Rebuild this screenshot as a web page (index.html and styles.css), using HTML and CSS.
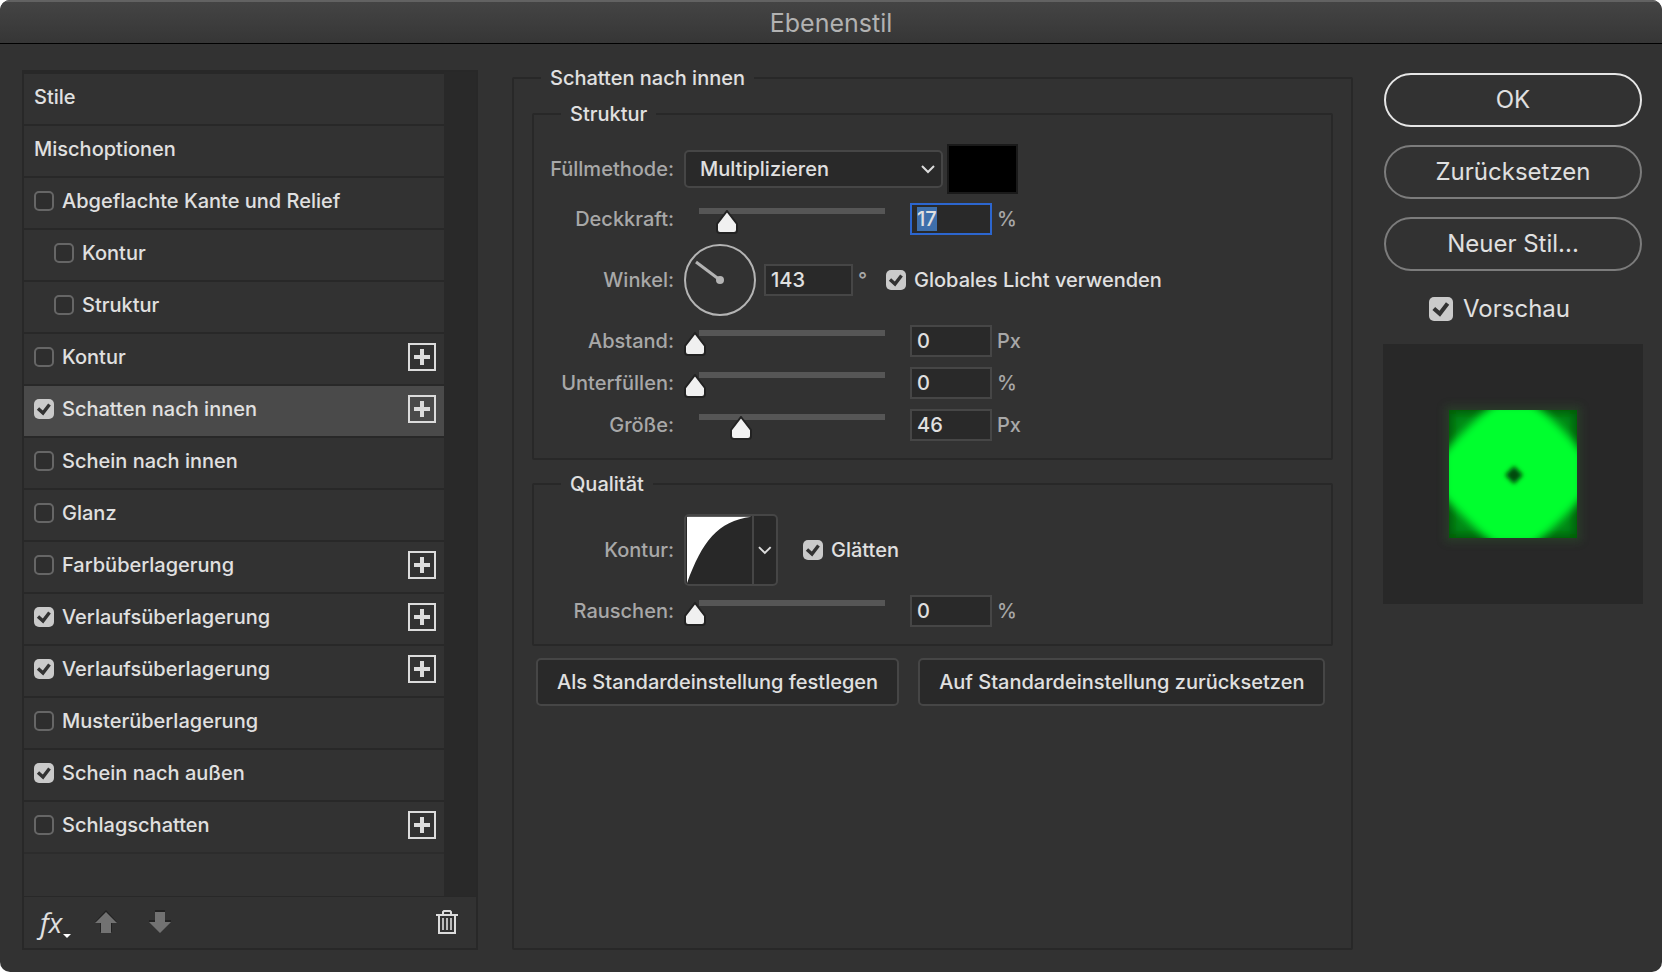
FILE: index.html
```
<!DOCTYPE html>
<html lang="de">
<head>
    <meta charset="UTF-8">
    <meta name="viewport" content="width=device-width, initial-scale=1.0">
    <title>Ebenenstil</title>
    <link rel="stylesheet" href="styles.css">
</head>
<body>
    <div class="dialog">
        <header class="titlebar">
            <h1>Ebenenstil</h1>
        </header>

        <main class="content">
            <aside class="sidebar">
                <div class="effects">
                    <ul class="effect-list">
                        <li class="effect">Stile</li>
                        <li class="effect">Mischoptionen</li>
                        <li class="effect"><label><input type="checkbox"> Abgeflachte Kante und Relief</label></li>
                        <li class="effect sub"><label><input type="checkbox"> Kontur</label></li>
                        <li class="effect sub"><label><input type="checkbox"> Struktur</label></li>
                        <li class="effect"><label><input type="checkbox"> Kontur</label><button class="add" aria-label="Kontur hinzufügen"></button></li>
                        <li class="effect active"><label><input type="checkbox" checked> Schatten nach innen</label><button class="add" aria-label="Schatten nach innen hinzufügen"></button></li>
                        <li class="effect"><label><input type="checkbox"> Schein nach innen</label></li>
                        <li class="effect"><label><input type="checkbox"> Glanz</label></li>
                        <li class="effect"><label><input type="checkbox"> Farbüberlagerung</label><button class="add" aria-label="Farbüberlagerung hinzufügen"></button></li>
                        <li class="effect"><label><input type="checkbox" checked> Verlaufsüberlagerung</label><button class="add" aria-label="Verlaufsüberlagerung hinzufügen"></button></li>
                        <li class="effect"><label><input type="checkbox" checked> Verlaufsüberlagerung</label><button class="add" aria-label="Verlaufsüberlagerung hinzufügen"></button></li>
                        <li class="effect"><label><input type="checkbox"> Musterüberlagerung</label></li>
                        <li class="effect"><label><input type="checkbox" checked> Schein nach außen</label></li>
                        <li class="effect"><label><input type="checkbox"> Schlagschatten</label><button class="add" aria-label="Schlagschatten hinzufügen"></button></li>
                    </ul>
                    <div class="scroll-gutter"></div>
                </div>
                <div class="toolbar">
                    <button class="tool fx" aria-label="Effekte">fx<svg class="caret" width="8" height="4" viewBox="0 0 8 4"><path d="M0 0h8L4 4z" fill="#fff"/></svg></button>
                    <button class="tool" aria-label="Nach oben">
                        <svg width="24" height="24" viewBox="0 0 24 24"><path d="M12 0L1 12h5v10h12V12h5z" fill="#222"/><path d="M12 2L1 13h6v10h10V13h6z" fill="#727272"/></svg>
                    </button>
                    <button class="tool" aria-label="Nach unten">
                        <svg width="24" height="24" viewBox="0 0 24 24"><path d="M7 0h10v10h6v2H1v-2h6z" fill="#222"/><path d="M12 23L1 12h6V2h10v10h6z" fill="#727272"/></svg>
                    </button>
                    <button class="tool trash" aria-label="Löschen">
                        <svg width="22" height="24" viewBox="0 0 22 24" fill="none" stroke="#dcdcdc" stroke-width="2"><path d="M0 5h22M3 5v18h16V5M7 5V2l1-1h6l1 1v3"/><path d="M7 8v12M11 8v12M15 8v12" stroke-width="1.6"/></svg>
                    </button>
                </div>
            </aside>

            <fieldset class="group panel">
                <legend>Schatten nach innen</legend>

                <fieldset class="group section">
                    <legend>Struktur</legend>
                    <div class="row">
                        <label class="name" for="mode">Füllmethode:</label>
                        <select id="mode" class="select">
                            <option>Multiplizieren</option>
                        </select>
                        <button class="swatch" aria-label="Schattenfarbe"></button>
                    </div>
                    <div class="row">
                        <label class="name" for="opacity">Deckkraft:</label>
                        <input type="range" class="slider" min="0" max="100" value="17" aria-label="Deckkraft">
                        <input type="text" class="field" id="opacity" value="17">
                        <span class="unit">%</span>
                    </div>
                    <div class="row">
                        <label class="name" for="angle">Winkel:</label>
                        <svg class="dial" width="72" height="72" viewBox="0 0 72 72">
                            <circle cx="36" cy="36" r="35" fill="none" stroke="#b4b4b4" stroke-width="2"/>
                            <path d="M36 36L12 18" stroke="#b4b4b4" stroke-width="3"/>
                            <circle cx="36" cy="36" r="4" fill="#b4b4b4"/>
                        </svg>
                        <input type="text" class="field angle" id="angle" value="143">
                        <span class="unit">°</span>
                        <label class="option"><input type="checkbox" checked> Globales Licht verwenden</label>
                    </div>
                    <div class="row">
                        <label class="name" for="distance">Abstand:</label>
                        <input type="range" class="slider" min="0" max="188" value="0" aria-label="Abstand">
                        <input type="text" class="field" id="distance" value="0">
                        <span class="unit">Px</span>
                    </div>
                    <div class="row">
                        <label class="name" for="choke">Unterfüllen:</label>
                        <input type="range" class="slider" min="0" max="100" value="0" aria-label="Unterfüllen">
                        <input type="text" class="field" id="choke" value="0">
                        <span class="unit">%</span>
                    </div>
                    <div class="row">
                        <label class="name" for="size">Größe:</label>
                        <input type="range" class="slider" min="0" max="188" value="46" aria-label="Größe">
                        <input type="text" class="field" id="size" value="46">
                        <span class="unit">Px</span>
                    </div>
                </fieldset>

                <fieldset class="group section">
                    <legend>Qualität</legend>
                    <div class="row">
                        <label class="name" for="contour">Kontur:</label>
                        <button class="contour" id="contour">
                            <svg width="68" height="68" viewBox="0 0 68 68"><path d="M1 0H67C32 5 17 25 1 68z" fill="#fff"/></svg>
                            <svg class="arrow" width="14" height="9" viewBox="0 0 14 9"><path d="M1 1l6 6 6-6" fill="none" stroke="#dcdcdc" stroke-width="2"/></svg>
                        </button>
                        <label class="option"><input type="checkbox" checked> Glätten</label>
                    </div>
                    <div class="row">
                        <label class="name" for="noise">Rauschen:</label>
                        <input type="range" class="slider" min="0" max="100" value="0" aria-label="Rauschen">
                        <input type="text" class="field" id="noise" value="0">
                        <span class="unit">%</span>
                    </div>
                </fieldset>

                <div class="defaults">
                    <button class="btn">Als Standardeinstellung festlegen</button>
                    <button class="btn">Auf Standardeinstellung zurücksetzen</button>
                </div>
            </fieldset>

            <div class="actions">
                <button class="pill primary">OK</button>
                <button class="pill">Zurücksetzen</button>
                <button class="pill">Neuer Stil...</button>
                <label class="preview-toggle"><input type="checkbox" checked> Vorschau</label>
                <svg class="preview" viewBox="0 0 260 260">
                    <defs>
                        <filter id="glow" x="-20%" y="-20%" width="140%" height="140%"><feGaussianBlur stdDeviation="4"/></filter>
                        <filter id="soft" x="-20%" y="-20%" width="140%" height="140%"><feGaussianBlur stdDeviation="4"/></filter>
                        <filter id="dot" x="-50%" y="-50%" width="200%" height="200%"><feGaussianBlur stdDeviation="2"/></filter>
                        <clipPath id="square"><rect width="128" height="128"/></clipPath>
                    </defs>
                    <rect x="62" y="62" width="136" height="136" fill="#2a5a2a" opacity="0.4" filter="url(#glow)"/>
                    <g transform="translate(66 66)" clip-path="url(#square)">
                        <rect width="128" height="128" fill="#005c08"/>
                        <rect x="4" y="4" width="120" height="120" fill="#008a14" filter="url(#soft)"/>
                        <path d="M46-6H84Q98 4 111 17T134 44V86Q124 98 111 111T84 134H46Q32 124 19 111T-6 86V44Q6 30 19 17T46-6z" fill="#00ff2d" filter="url(#soft)"/>
                        <path d="M65 56l9 9-9 9-9-9z" fill="#004a08" filter="url(#dot)"/>
                    </g>
                </svg>
            </div>
        </main>
    </div>

    <script>
        // Deckkraft ist beim Öffnen markiert
        const opacity = document.getElementById("opacity");
        opacity.focus();
        opacity.select();
    </script>
</body>
</html>
```
FILE: styles.css
```
* {
    box-sizing: border-box;
}
body {
    margin: 0;
    background: #fff;
    font-family: Inter, "Liberation Sans", sans-serif;
    font-size: 20px;
    font-weight: 500;
    line-height: 24px;
    color: #e0e0e0;
}
button, input, select {
    font: inherit;
    color: inherit;
    margin: 0;
}
button {
    padding: 0;
    cursor: pointer;
}
.dialog {
    display: flex;
    flex-direction: column;
    min-height: 100vh;
    background: #323232;
    border-radius: 10px;
    overflow: hidden;
}
.titlebar {
    height: 44px;
    background: linear-gradient(#444, #363636);
    border-top: 2px solid #626262;
    border-bottom: 1px solid #000;
    text-align: center;
}
.titlebar h1 {
    margin: 0;
    font-size: 25px;
    font-weight: 400;
    line-height: 42px;
    color: #b2b2b2;
}
.content {
    flex: 1;
    display: grid;
    grid-template-columns: 456px 1fr 260px;
    padding: 22px 19px 22px 22px;
}

/* Effektliste */
.sidebar {
    display: flex;
    flex-direction: column;
    margin-top: 4px;
    border: 2px solid #282828;
}
.effects {
    flex: 1;
    display: flex;
    border-bottom: 1px solid #282828;
}
.effect-list {
    flex: 1;
    margin: 0;
    padding: 0;
    list-style: none;
    border-top: 2px solid #282828;
}
.effect {
    display: flex;
    align-items: center;
    justify-content: space-between;
    height: 52px;
    padding: 0 8px 4px 10px;
    border-bottom: 2px solid #282828;
}
.effect:last-child {
    border-color: #2c2c2c;
}
.effect.sub {
    padding-left: 30px;
}
.effect.active {
    background: #4a4a4a;
}
.effect label, .option, .preview-toggle {
    display: flex;
    align-items: center;
    gap: 8px;
}
.scroll-gutter {
    width: 32px;
    background: #292929;
}
input[type='checkbox'] {
    appearance: none;
    width: 20px;
    height: 20px;
    border: 2px solid #666;
    border-radius: 5px;
    background: #2e2e2e;
}
input[type='checkbox']:checked {
    border: none;
    background: #cacaca url("data:image/svg+xml,%3Csvg xmlns='http://www.w3.org/2000/svg' viewBox='0 0 20 20'%3E%3Cpath d='M4 9.500l5 4.500 6.500-8.500' fill='none' stroke='%23323232' stroke-width='3.400'/%3E%3C/svg%3E") center / 100%;
}
.add {
    width: 28px;
    height: 28px;
    border: 2px solid #dcdcdc;
    background:
        linear-gradient(#dcdcdc, #dcdcdc) center / 16px 4px no-repeat,
        linear-gradient(#dcdcdc, #dcdcdc) center / 4px 16px no-repeat;
}
.toolbar {
    display: flex;
    align-items: center;
    gap: 30px;
    height: 51px;
    padding: 0 18px 2px 16px;
}
.tool {
    display: flex;
    border: none;
    background: none;
}
.fx {
    position: relative;
    width: 24px;
    font-family: "Open Sans", sans-serif;
    font-style: italic;
    font-weight: 400;
    font-size: 28px;
    line-height: 32px;
}
.caret {
    position: absolute;
    right: -7px;
    bottom: 0;
}
.trash {
    margin-left: auto;
}

/* Einstellungen */
.group {
    margin: 0;
    min-width: 0;
    border: 2px solid #282828;
    border-radius: 2px;
}
.group legend {
    margin-left: 9px;
    padding: 0 9px;
}
.panel {
    margin: 0 30px 0 34px;
    padding: 12px 18px;
}
.section {
    display: flex;
    flex-direction: column;
    gap: 8px;
    margin-bottom: 12px;
    padding: 18px 0 16px;
}
.section legend {
    margin-left: 27px;
}
.row {
    display: flex;
    align-items: center;
    min-height: 34px;
}
.name {
    width: 140px;
    margin-right: 10px;
    text-align: right;
    color: #a8a8a8;
}
.unit {
    width: 32px;
    padding-left: 5px;
    color: #a8a8a8;
}
.select {
    appearance: none;
    width: 259px;
    height: 38px;
    padding: 0 14px;
    border: 2px solid #464646;
    border-radius: 5px;
    background: #292929 url("data:image/svg+xml,%3Csvg xmlns='http://www.w3.org/2000/svg' viewBox='0 0 14 9'%3E%3Cpath d='M1 1l6 6 6-6' fill='none' stroke='%23dcdcdc' stroke-width='2'/%3E%3C/svg%3E") right 6px center / 14px 9px no-repeat;
}
.swatch {
    width: 71px;
    height: 50px;
    margin-left: 4px;
    border: 2px solid #1a1a1a;
    background: #000;
}
.field {
    width: 82px;
    height: 32px;
    padding: 0 5px;
    border: 2px solid #464646;
    background: #292929;
    line-height: 26px;
}
.field:focus {
    border-color: #2c66cf;
    outline: none;
}
.field::selection {
    background: #3e6fab;
    color: #e0e0e0;
}
.angle {
    width: 89px;
    margin-left: 8px;
}
.slider {
    appearance: none;
    width: 210px;
    height: 32px;
    margin-right: 16px;
    background: linear-gradient(#565656, #565656) 15px 5px / 186px 6px no-repeat;
}
.slider::-webkit-slider-runnable-track {
    height: 32px;
}
.slider::-webkit-slider-thumb {
    appearance: none;
    width: 22px;
    height: 24px;
    margin-top: 7px;
    background: url("data:image/svg+xml,%3Csvg xmlns='http://www.w3.org/2000/svg' viewBox='0 0 22 24'%3E%3Cpath d='M11 1L21 14v6q0 3-3 3H4q-3 0-3-3v-6z' fill='%23f0f0f0' stroke='%23222' stroke-width='2'/%3E%3C/svg%3E");
}
.contour {
    display: flex;
    align-items: center;
    width: 94px;
    height: 72px;
    border: 2px solid #464646;
    border-radius: 5px;
    background: #282828;
    overflow: hidden;
}
.contour .arrow {
    box-sizing: content-box;
    padding: 30px 4px;
    border-left: 2px solid #464646;
}
.option {
    margin-left: 1px;
}
.contour + .option {
    margin-left: 25px;
}
.defaults {
    display: flex;
    gap: 19px;
    padding: 0 4px;
}
.btn {
    height: 48px;
    padding: 0 19px;
    border: 2px solid #464646;
    border-radius: 5px;
    background: #292929;
    white-space: nowrap;
}

/* Rechte Spalte */
.actions {
    display: flex;
    flex-direction: column;
    gap: 18px;
    margin-top: 7px;
    font-size: 24px;
    font-weight: 400;
}
.pill {
    height: 54px;
    margin: 0 1px;
    border: 2px solid #7c7c7c;
    border-radius: 27px;
    background: none;
}
.pill.primary {
    border-color: #e6e6e6;
}
.preview-toggle {
    gap: 10px;
    margin: 8px 0 5px 46px;
}
.preview-toggle input {
    width: 24px;
    height: 24px;
}
.preview {
    width: 100%;
    background: #282828;
}
```
